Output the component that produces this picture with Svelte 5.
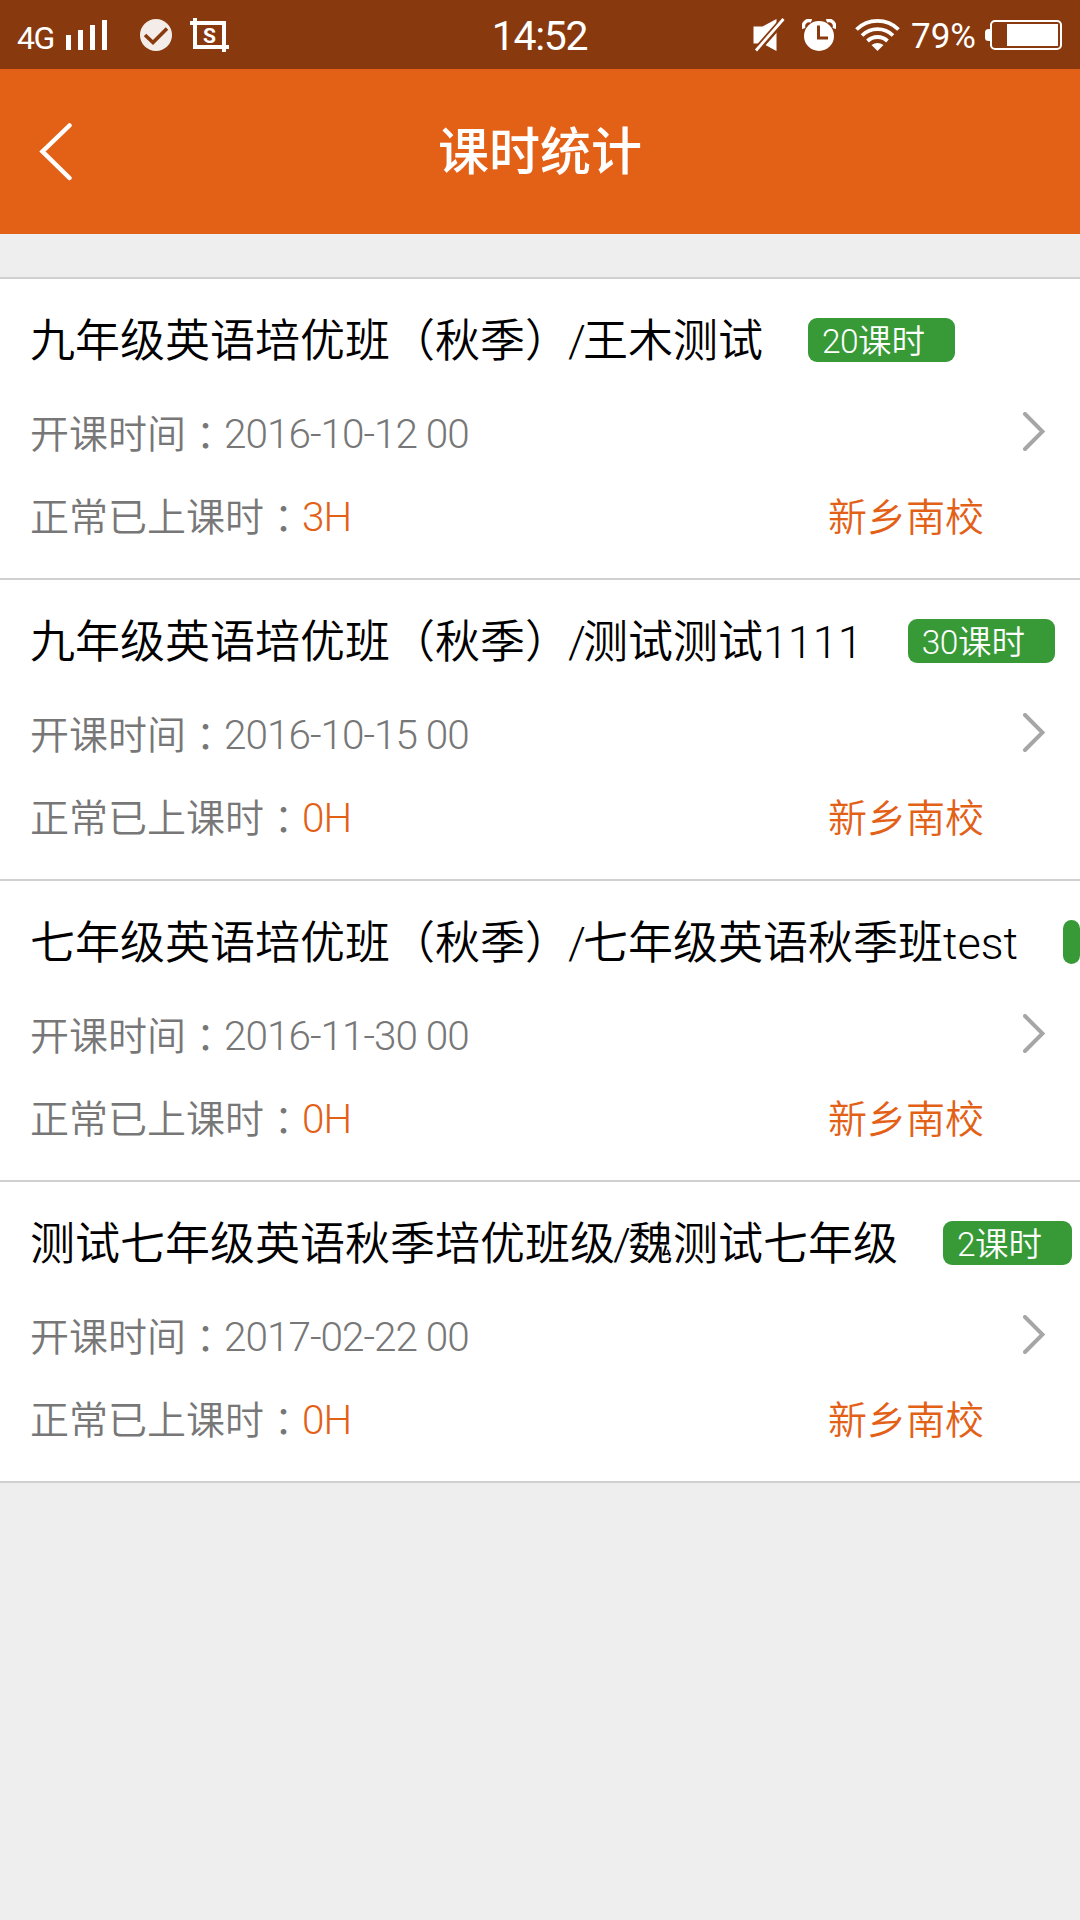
<script lang="ts">
	const courses = [
		{ name: "九年级英语培优班（秋季）", teacher: "王木测试", total: 20, start: "2016-10-12 00", used: 3, school: "新乡南校" },
		{ name: "九年级英语培优班（秋季）", teacher: "测试测试1111", total: 30, start: "2016-10-15 00", used: 0, school: "新乡南校" },
		{ name: "七年级英语培优班（秋季）", teacher: "七年级英语秋季班test", total: null, start: "2016-11-30 00", used: 0, school: "新乡南校" },
		{ name: "测试七年级英语秋季培优班级", teacher: "魏测试七年级", total: 2, start: "2017-02-22 00", used: 0, school: "新乡南校" },
	];
</script>

<div class="screen">
	<div class="status">
		<div class="side">
			<span class="net">4G</span>
			<svg class="signal" width="41" height="30" viewBox="0 0 41 30" fill="#fff">
				<path d="M0 15h5v15H0zM12 10h5v20h-5zM24 5h5v25h-5zM36 0h5v30h-5z" />
			</svg>
			<svg class="check" width="32" height="32" viewBox="0 0 32 32">
				<circle cx="16" cy="16" r="16" fill="#f4ece8" />
				<path d="M5 16l8 7.500L27 9.500" fill="none" stroke="#88390e" stroke-width="3.600" />
			</svg>
			<svg class="shot" width="39" height="34" viewBox="0 0 39 34" fill="none" stroke="#fff">
				<path d="M0 5h34v29M5 0v29h34" stroke-width="4" />
				<text x="19.500" y="24.500" text-anchor="middle" fill="#fff" stroke="none">S</text>
			</svg>
		</div>
		<span class="clock">14:52</span>
		<div class="side right">
			<svg class="mute" width="32" height="34" viewBox="0 0 32 34">
				<path d="M.5 8.500h9L23.500 1v32L9.500 25.500h-9z" fill="#fff" />
				<path d="M1.500 34.500L32.500-.500" stroke="#88390e" stroke-width="7" />
				<path d="M3 32.500L30.500 1" stroke="#fff" stroke-width="2.800" />
			</svg>
			<svg class="alarm" width="34" height="32" viewBox="0 0 34 32" fill="none">
				<path d="M1.800 9.500C0 4 5 0 9.500 2M32.200 9.500C34 4 29 0 24.500 2" stroke="#fff" stroke-width="3.500" />
				<circle cx="17" cy="17" r="15" fill="#fff" />
				<path d="M16.500 6.500v12.500h9.500" stroke="#88390e" stroke-width="3" />
			</svg>
			<svg class="wifi" width="45" height="32" viewBox="0 0 45 32" fill="none" stroke="#fff" stroke-width="3.800">
				<path d="M1.500 10.500a30 30 0 0 1 42 0M7 16.500a22 22 0 0 1 31 0M12.500 22a14.500 14.500 0 0 1 20 0" />
				<path d="M22.500 32l-6-6q6-4 12 0z" fill="#fff" stroke="none" />
			</svg>
			<span class="percent">79%</span>
			<svg class="battery" width="77" height="30" viewBox="0 0 77 30">
				<path d="M5 9H3.500Q0 9 0 12.500v5Q0 21 3.500 21H5z" fill="#fff" />
				<rect x="6" y="1" width="70" height="28" rx="4" fill="none" stroke="#fff" stroke-width="2" />
				<rect x="22" y="4" width="51" height="22" fill="#fff" />
			</svg>
		</div>
	</div>

	<header>
		<svg class="back" width="34" height="58" viewBox="0 0 34 58" fill="none" stroke="#fff" stroke-width="4.500">
			<path d="M30.500 2.500L3.500 28.500l27 26.500" stroke-linecap="round" />
		</svg>
		<h1>课时统计</h1>
	</header>

	<ul>
		{#each courses as course}
			<li>
				<div class="title">
					<span class="name">{course.name}<span class="slash">/</span>{course.teacher}</span>
					<span class="badge" class:clipped={!course.total}>
						{#if course.total}<span class="num">{course.total}</span>课时{/if}
					</span>
				</div>
				<div class="line">
					<span>开课时间<span class="colon">：</span><span class="date">{course.start}</span></span>
					<svg class="chevron" width="22" height="39" viewBox="0 0 22 39" fill="none" stroke="#a6a6a6" stroke-width="4">
						<path d="M2 2l17.500 17.500L2 37" stroke-linecap="round" />
					</svg>
				</div>
				<div class="line last">
					<span>正常已上课时<span class="colon">：</span><em class="date">{course.used}H</em></span>
					<em class="school">{course.school}</em>
				</div>
			</li>
		{/each}
	</ul>
</div>

<style>
	:global(body) {
		background: #eee;
	}
	.screen {
		width: 1080px;
		height: 1920px;
		overflow: hidden;
		background: #eee;
		font-family: Roboto, "Noto Sans CJK SC", sans-serif;
		font-weight: 350;
	}
	.status {
		box-sizing: border-box;
		height: 69px;
		padding: 0 18px 0 17px;
		display: grid;
		grid-template-columns: 1fr auto 1fr;
		align-items: center;
		background: #88390e;
		color: #fff;
		font-weight: 400;
	}
	.side {
		display: flex;
		align-items: center;
	}
	.right {
		justify-content: flex-end;
	}
	.net {
		width: 49px;
		padding-top: 7px;
		font-size: 32px;
		letter-spacing: -1.500px;
	}
	.check {
		margin-left: 33px;
	}
	.shot {
		margin-left: 18px;
	}
	.shot text {
		font-size: 21px;
		font-weight: 700;
	}
	.clock {
		padding-top: 2px;
		font-size: 41px;
		letter-spacing: -1.300px;
	}
	.alarm {
		margin-left: 17px;
	}
	.wifi {
		margin-left: 19px;
	}
	.percent {
		margin: 4px 9px 0 11px;
		font-size: 35px;
	}
	header {
		height: 165px;
		display: grid;
		grid-template-columns: 1fr auto 1fr;
		align-items: center;
		background: #e36017;
		color: #fff;
	}
	.back {
		margin-left: 39px;
	}
	h1 {
		margin: 0;
		padding-top: 2px;
		font-size: 51px;
		font-weight: 500;
		line-height: 70px;
	}
	ul {
		margin: 43px 0 0;
		padding: 0;
		list-style: none;
		border-top: 2px solid #d0d0d0;
		background: #fff;
	}
	li {
		box-sizing: border-box;
		height: 301px;
		padding-top: 30px;
		border-bottom: 2px solid #d0d0d0;
	}
	.title {
		height: 62px;
		padding-left: 30px;
		display: flex;
		align-items: center;
		gap: 45px;
		overflow: hidden;
		color: #000;
		font-size: 45px;
		line-height: 62px;
		white-space: nowrap;
	}
	.name {
		padding-top: 4px;
	}
	.slash {
		margin: 0 -3px 0 -2px;
	}
	.badge {
		box-sizing: border-box;
		height: 44px;
		padding: 0 30px 0 14px;
		border-radius: 9px;
		background: #379a37;
		color: #fff;
		font-size: 33.500px;
		line-height: 47px;
	}
	.num {
		letter-spacing: -.5px;
	}
	.clipped {
		width: 19px;
		padding: 0;
	}
	.line {
		height: 82px;
		margin-top: 22px;
		padding: 0 35px 0 30px;
		display: flex;
		align-items: center;
		justify-content: space-between;
		color: #777;
		font-size: 39px;
		line-height: 82px;
	}
	.last {
		margin-top: 1px;
		padding-right: 96px;
	}
	.colon {
		font-family: "Noto Sans CJK TC", sans-serif;
		line-height: 1;
		vertical-align: -2px;
	}
	.date {
		margin-left: -1px;
		font-size: 40.500px;
		letter-spacing: -1px;
	}
	.chevron {
		margin-bottom: 6px;
	}
	em {
		color: #e36017;
		font-style: normal;
	}
	.school {
		padding-top: 2px;
	}
</style>
